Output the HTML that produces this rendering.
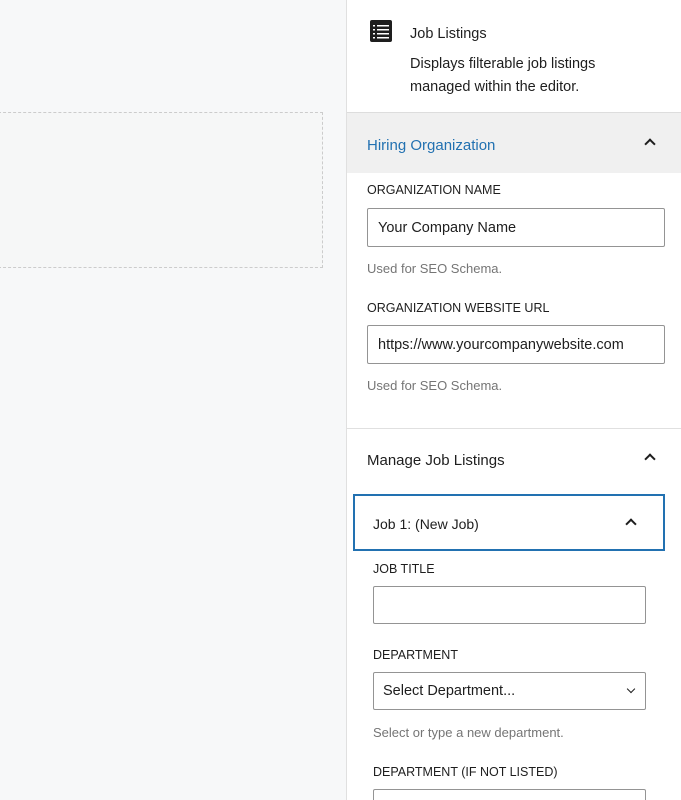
<!DOCTYPE html>
<html style="width:681px;height:800px;overflow:hidden"><head><style>
*{box-sizing:border-box;margin:0;padding:0}
body{width:681px;height:800px;overflow:hidden;background:#f7f8f9;font-family:"Liberation Sans",sans-serif;color:#1e1e1e;position:relative}
.dash{position:absolute;left:-2px;top:112px;width:325px;height:156px;border:1px dashed #ccc;background:#f6f7f7}
.side{position:absolute;left:346px;top:0;width:335px;height:800px;background:#fff;border-left:1px solid #e0e0e0;overflow:hidden}
.a{position:absolute}
.lbl{position:absolute;font-size:12.5px;color:#1e1e1e}
.inp{position:absolute;border:1px solid #949494;border-radius:2px;height:39px;font-size:14.5px;padding:11px 10px;background:#fff}
.help{position:absolute;font-size:13px;color:#757575}
.chev{position:absolute;width:8px;height:8px;border-left:2px solid #1e1e1e;border-top:2px solid #1e1e1e;transform:rotate(45deg)}
</style></head><body>
<div class="dash"></div>
<div class="side">
  <svg class="a" style="left:23px;top:20px" width="23" height="23" viewBox="0 0 23 23"><rect x="0" y="0" width="22" height="22" rx="2" fill="#1e1e1e"/><g fill="#fff"><rect x="3" y="5" width="2" height="1.5"/><rect x="7" y="5" width="12" height="1.5"/><rect x="3" y="9" width="2" height="1.5"/><rect x="7" y="9" width="12" height="1.5"/><rect x="3" y="13" width="2" height="1.5"/><rect x="7" y="13" width="12" height="1.5"/><rect x="3" y="17" width="2" height="1.5"/><rect x="7" y="17" width="12" height="1.5"/></g></svg>
  <div class="a" style="left:63px;top:26px;font-size:14.5px">Job Listings</div>
  <div class="a" style="left:63px;top:53px;font-size:14.5px;line-height:23px">Displays filterable job listings<br>managed within the editor.</div>
  <div class="a" style="left:0;top:112px;width:335px;height:61px;background:#f0f0f0;border-top:1px solid #ddd"></div>
  <div class="a" style="left:20px;top:137px;font-size:15px;color:#2271b1">Hiring Organization</div>
  <div class="chev" style="left:299px;top:140px"></div>
  <div class="lbl" style="left:20px;top:183px">ORGANIZATION NAME</div>
  <div class="inp" style="left:20px;top:208px;width:298px">Your Company Name</div>
  <div class="help" style="left:20px;top:261px">Used for SEO Schema.</div>
  <div class="lbl" style="left:20px;top:301px">ORGANIZATION WEBSITE URL</div>
  <div class="inp" style="left:20px;top:325px;width:298px">https://www.yourcompanywebsite.com</div>
  <div class="help" style="left:20px;top:378px">Used for SEO Schema.</div>
  <div class="a" style="left:0;top:428px;width:335px;border-top:1px solid #e0e0e0"></div>
  <div class="a" style="left:20px;top:452px;font-size:15px">Manage Job Listings</div>
  <div class="chev" style="left:299px;top:455px"></div>
  <div class="a" style="left:6px;top:494px;width:312px;height:57px;border:2px solid #2271b1"></div>
  <div class="a" style="left:26px;top:516px;font-size:14px">Job 1: (New Job)</div>
  <div class="chev" style="left:280px;top:520px"></div>
  <div class="lbl" style="left:26px;top:562px">JOB TITLE</div>
  <div class="inp" style="left:26px;top:586px;width:273px;height:38px"></div>
  <div class="lbl" style="left:26px;top:648px">DEPARTMENT</div>
  <div class="inp" style="left:26px;top:672px;width:273px;height:38px;padding:10px 9px">Select Department...</div>
  <div class="a" style="left:281px;top:686px;width:6px;height:6px;border-right:1.5px solid #1e1e1e;border-bottom:1.5px solid #1e1e1e;transform:rotate(45deg)"></div>
  <div class="help" style="left:26px;top:725px">Select or type a new department.</div>
  <div class="lbl" style="left:26px;top:765px">DEPARTMENT (IF NOT LISTED)</div>
  <div class="inp" style="left:26px;top:789px;width:273px"></div>
</div>
</body></html>
